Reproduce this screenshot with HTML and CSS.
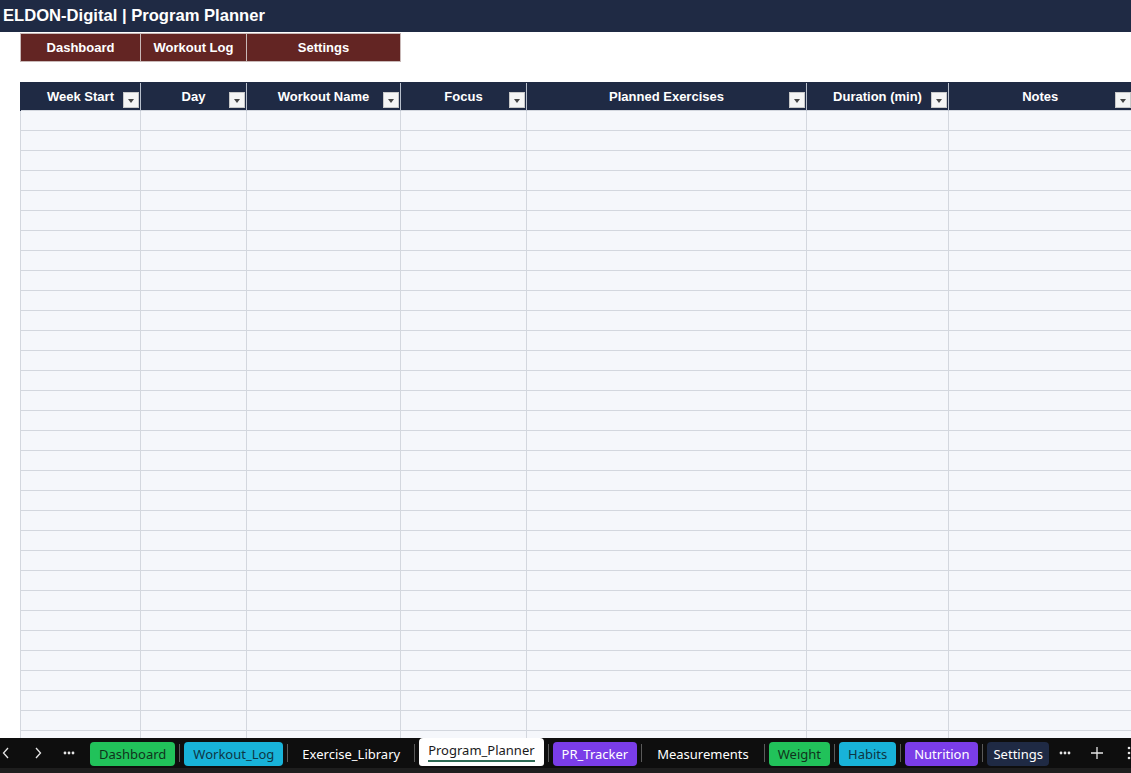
FILE: index.html
```html
<!DOCTYPE html>
<html>
<head>
<meta charset="utf-8">
<link rel="stylesheet" href="styles.css">
</head>
<body>
<div class="page">
  <header class="titlebar">ELDON-Digital | Program Planner</header>
  <nav class="navrow">
    <div class="navbtn w1">Dashboard</div>
    <div class="navbtn w2">Workout Log</div>
    <div class="navbtn w3">Settings</div>
  </nav>
  <div class="sheet">
    <table class="grid">
      <colgroup>
        <col class="c1"><col class="c2"><col class="c3"><col class="c4"><col class="c5"><col class="c6"><col class="c7">
      </colgroup>
      <thead>
        <tr>
          <th>Week Start<span class="flt"></span></th>
          <th>Day<span class="flt"></span></th>
          <th>Workout Name<span class="flt"></span></th>
          <th>Focus<span class="flt"></span></th>
          <th>Planned Exercises<span class="flt"></span></th>
          <th>Duration (min)<span class="flt"></span></th>
          <th>Notes<span class="flt"></span></th>
        </tr>
      </thead>
      <tbody>
        <tr><td></td><td></td><td></td><td></td><td></td><td></td><td></td></tr>
        <tr><td></td><td></td><td></td><td></td><td></td><td></td><td></td></tr>
        <tr><td></td><td></td><td></td><td></td><td></td><td></td><td></td></tr>
        <tr><td></td><td></td><td></td><td></td><td></td><td></td><td></td></tr>
        <tr><td></td><td></td><td></td><td></td><td></td><td></td><td></td></tr>
        <tr><td></td><td></td><td></td><td></td><td></td><td></td><td></td></tr>
        <tr><td></td><td></td><td></td><td></td><td></td><td></td><td></td></tr>
        <tr><td></td><td></td><td></td><td></td><td></td><td></td><td></td></tr>
        <tr><td></td><td></td><td></td><td></td><td></td><td></td><td></td></tr>
        <tr><td></td><td></td><td></td><td></td><td></td><td></td><td></td></tr>
        <tr><td></td><td></td><td></td><td></td><td></td><td></td><td></td></tr>
        <tr><td></td><td></td><td></td><td></td><td></td><td></td><td></td></tr>
        <tr><td></td><td></td><td></td><td></td><td></td><td></td><td></td></tr>
        <tr><td></td><td></td><td></td><td></td><td></td><td></td><td></td></tr>
        <tr><td></td><td></td><td></td><td></td><td></td><td></td><td></td></tr>
        <tr><td></td><td></td><td></td><td></td><td></td><td></td><td></td></tr>
        <tr><td></td><td></td><td></td><td></td><td></td><td></td><td></td></tr>
        <tr><td></td><td></td><td></td><td></td><td></td><td></td><td></td></tr>
        <tr><td></td><td></td><td></td><td></td><td></td><td></td><td></td></tr>
        <tr><td></td><td></td><td></td><td></td><td></td><td></td><td></td></tr>
        <tr><td></td><td></td><td></td><td></td><td></td><td></td><td></td></tr>
        <tr><td></td><td></td><td></td><td></td><td></td><td></td><td></td></tr>
        <tr><td></td><td></td><td></td><td></td><td></td><td></td><td></td></tr>
        <tr><td></td><td></td><td></td><td></td><td></td><td></td><td></td></tr>
        <tr><td></td><td></td><td></td><td></td><td></td><td></td><td></td></tr>
        <tr><td></td><td></td><td></td><td></td><td></td><td></td><td></td></tr>
        <tr><td></td><td></td><td></td><td></td><td></td><td></td><td></td></tr>
        <tr><td></td><td></td><td></td><td></td><td></td><td></td><td></td></tr>
        <tr><td></td><td></td><td></td><td></td><td></td><td></td><td></td></tr>
        <tr><td></td><td></td><td></td><td></td><td></td><td></td><td></td></tr>
        <tr><td></td><td></td><td></td><td></td><td></td><td></td><td></td></tr>
        <tr><td></td><td></td><td></td><td></td><td></td><td></td><td></td></tr>
      </tbody>
    </table>
  </div>
  <footer class="tabbar">
    <span class="ctl prev">
      <svg width="10" height="14" viewBox="0 0 10 14"><path d="M7 2 L2.5 7 L7 12" fill="none" stroke="#e6e6e6" stroke-width="1.3"/></svg>
    </span>
    <span class="ctl next">
      <svg width="10" height="14" viewBox="0 0 10 14"><path d="M3 2 L7.5 7 L3 12" fill="none" stroke="#e6e6e6" stroke-width="1.3"/></svg>
    </span>
    <span class="ctl more">
      <svg width="12" height="4" viewBox="0 0 12 4"><circle cx="2" cy="2" r="1.4" fill="#e6e6e6"/><circle cx="6" cy="2" r="1.4" fill="#e6e6e6"/><circle cx="10" cy="2" r="1.4" fill="#e6e6e6"/></svg>
    </span>
    <span class="tab pill green">Dashboard</span>
    <span class="sep"></span>
    <span class="tab pill cyan">Workout_Log</span>
    <span class="sep"></span>
    <span class="tab plain">Exercise_Library</span>
    <span class="sep"></span>
    <span class="tab active"><span class="ul">Program_Planner</span></span>
    <span class="sep"></span>
    <span class="tab pill purple">PR_Tracker</span>
    <span class="sep"></span>
    <span class="tab plain wide">Measurements</span>
    <span class="sep"></span>
    <span class="tab pill green">Weight</span>
    <span class="sep"></span>
    <span class="tab pill cyan">Habits</span>
    <span class="sep"></span>
    <span class="tab pill purple">Nutrition</span>
    <span class="sep"></span>
    <span class="tab pill navy">Settings</span>
    <span class="ctl more2">
      <svg width="12" height="4" viewBox="0 0 12 4"><circle cx="2" cy="2" r="1.4" fill="#e6e6e6"/><circle cx="6" cy="2" r="1.4" fill="#e6e6e6"/><circle cx="10" cy="2" r="1.4" fill="#e6e6e6"/></svg>
    </span>
    <span class="ctl plus">
      <svg width="14" height="14" viewBox="0 0 14 14"><path d="M7 1 V13 M1 7 H13" stroke="#e6e6e6" stroke-width="1.3"/></svg>
    </span>
    <span class="ctl vdots">
      <svg width="4" height="14" viewBox="0 0 4 14"><circle cx="2" cy="2" r="1.3" fill="#e6e6e6"/><circle cx="2" cy="7" r="1.3" fill="#e6e6e6"/><circle cx="2" cy="12" r="1.3" fill="#e6e6e6"/></svg>
    </span>
  </footer>
</div>
</body>
</html>
```

FILE: styles.css
```css
* { box-sizing: border-box; }
html, body { margin: 0; padding: 0; }
body { background: #ffffff; font-family: "Liberation Sans", Arial, sans-serif; }

.page {
  width: 1131px;
  height: 773px;
  display: flex;
  flex-direction: column;
  overflow: hidden;
}

.titlebar {
  height: 32px;
  flex: none;
  background: #1f2a44;
  color: #ffffff;
  font-weight: bold;
  font-size: 16.6px;
  line-height: 32px;
  padding-left: 3px;
  white-space: nowrap;
}

.navrow {
  flex: none;
  display: flex;
  margin-left: 20px;
  margin-top: 1px;
  height: 29px;
}
.navbtn {
  background: #632523;
  color: #ffffff;
  font-weight: bold;
  font-size: 13px;
  display: flex;
  align-items: center;
  justify-content: center;
  border: 1px solid #c9b9b8;
  border-right: none;
}
.navbtn.w3 { border-right: 1px solid #c9b9b8; }
.w1 { width: 120px; }
.w2 { width: 106px; }
.w3 { width: 155px; }

.sheet {
  flex: 1 1 auto;
  min-height: 0;
  overflow: hidden;
  margin-top: 20px;
  padding-left: 20px;
}

.grid {
  border-collapse: collapse;
  table-layout: fixed;
  width: 1111px;
}
.c1 { width: 120px; }
.c2 { width: 106px; }
.c3 { width: 154px; }
.c4 { width: 126px; }
.c5 { width: 280px; }
.c6 { width: 142px; }
.c7 { width: 183px; }

.grid th {
  position: relative;
  height: 28px;
  padding: 0;
  background: #1f2a44;
  color: #ffffff;
  font-weight: bold;
  font-size: 13px;
  text-align: center;
  border-left: 1px solid #b8bfcc;
  border-top: 1px solid #1f2a44;
  white-space: nowrap;
}
.grid th:first-child { border-left: 1px solid #1f2a44; }

.flt {
  position: absolute;
  right: 1px;
  bottom: 2px;
  width: 16px;
  height: 16px;
  background: #f4f4f4;
  border: 1px solid #c8c8c8;
}
.flt::after {
  content: "";
  position: absolute;
  left: 4px;
  top: 6px;
  border-left: 3.5px solid transparent;
  border-right: 3.5px solid transparent;
  border-top: 4px solid #444444;
}

.grid td {
  height: 20px;
  padding: 0;
  background: #f5f7fb;
  border: 1px solid #d3d7de;
}

.tabbar {
  flex: none;
  height: 35px;
  background: #0e0e0e;
  border-bottom: 5px solid #1e1e1e;
  display: flex;
  align-items: center;
  font-family: "Noto Sans", "Open Sans", sans-serif;
  font-size: 13px;
  color: #ffffff;
  white-space: nowrap;
}

.ctl {
  display: flex;
  align-items: center;
  justify-content: center;
  height: 24px;
  flex: none;
}
.prev { width: 12px; }
.next { width: 32px; margin-left: 10px; }
.more { width: 30px; margin-right: 6px; }
.more2 { width: 32px; }
.plus { width: 32px; }
.vdots { width: 16px; margin-left: 8px; }

.tab {
  height: 24px;
  display: flex;
  align-items: center;
  padding: 0 9px;
  border-radius: 4px;
  margin-top: 1px;
  flex: none;
}
.pill.green { background: #21c25a; color: #10331c; }
.pill.cyan { background: #18b3d9; color: #0e3644; }
.pill.purple { background: #7a3de8; color: #ffffff; }
.pill.navy { background: #1f2a44; color: #ffffff; padding: 0 6px; }
.plain { color: #ffffff; padding: 0 10px; }
.plain.wide { padding: 0 11px; }
.active {
  background: #ffffff;
  color: #1a1a1a;
  height: 28px;
  margin-top: -2px;
  border-radius: 4px 4px 3px 3px;
  padding: 0 9px;
  align-items: flex-start;
  padding-top: 3px;
}
.active .ul {
  border-bottom: 2px solid #2e6b55;
  padding-bottom: 1px;
  line-height: 18px;
}
.sep {
  width: 1px;
  height: 18px;
  background: #5a5a5a;
  margin: 0 4px;
  flex: none;
}
```
